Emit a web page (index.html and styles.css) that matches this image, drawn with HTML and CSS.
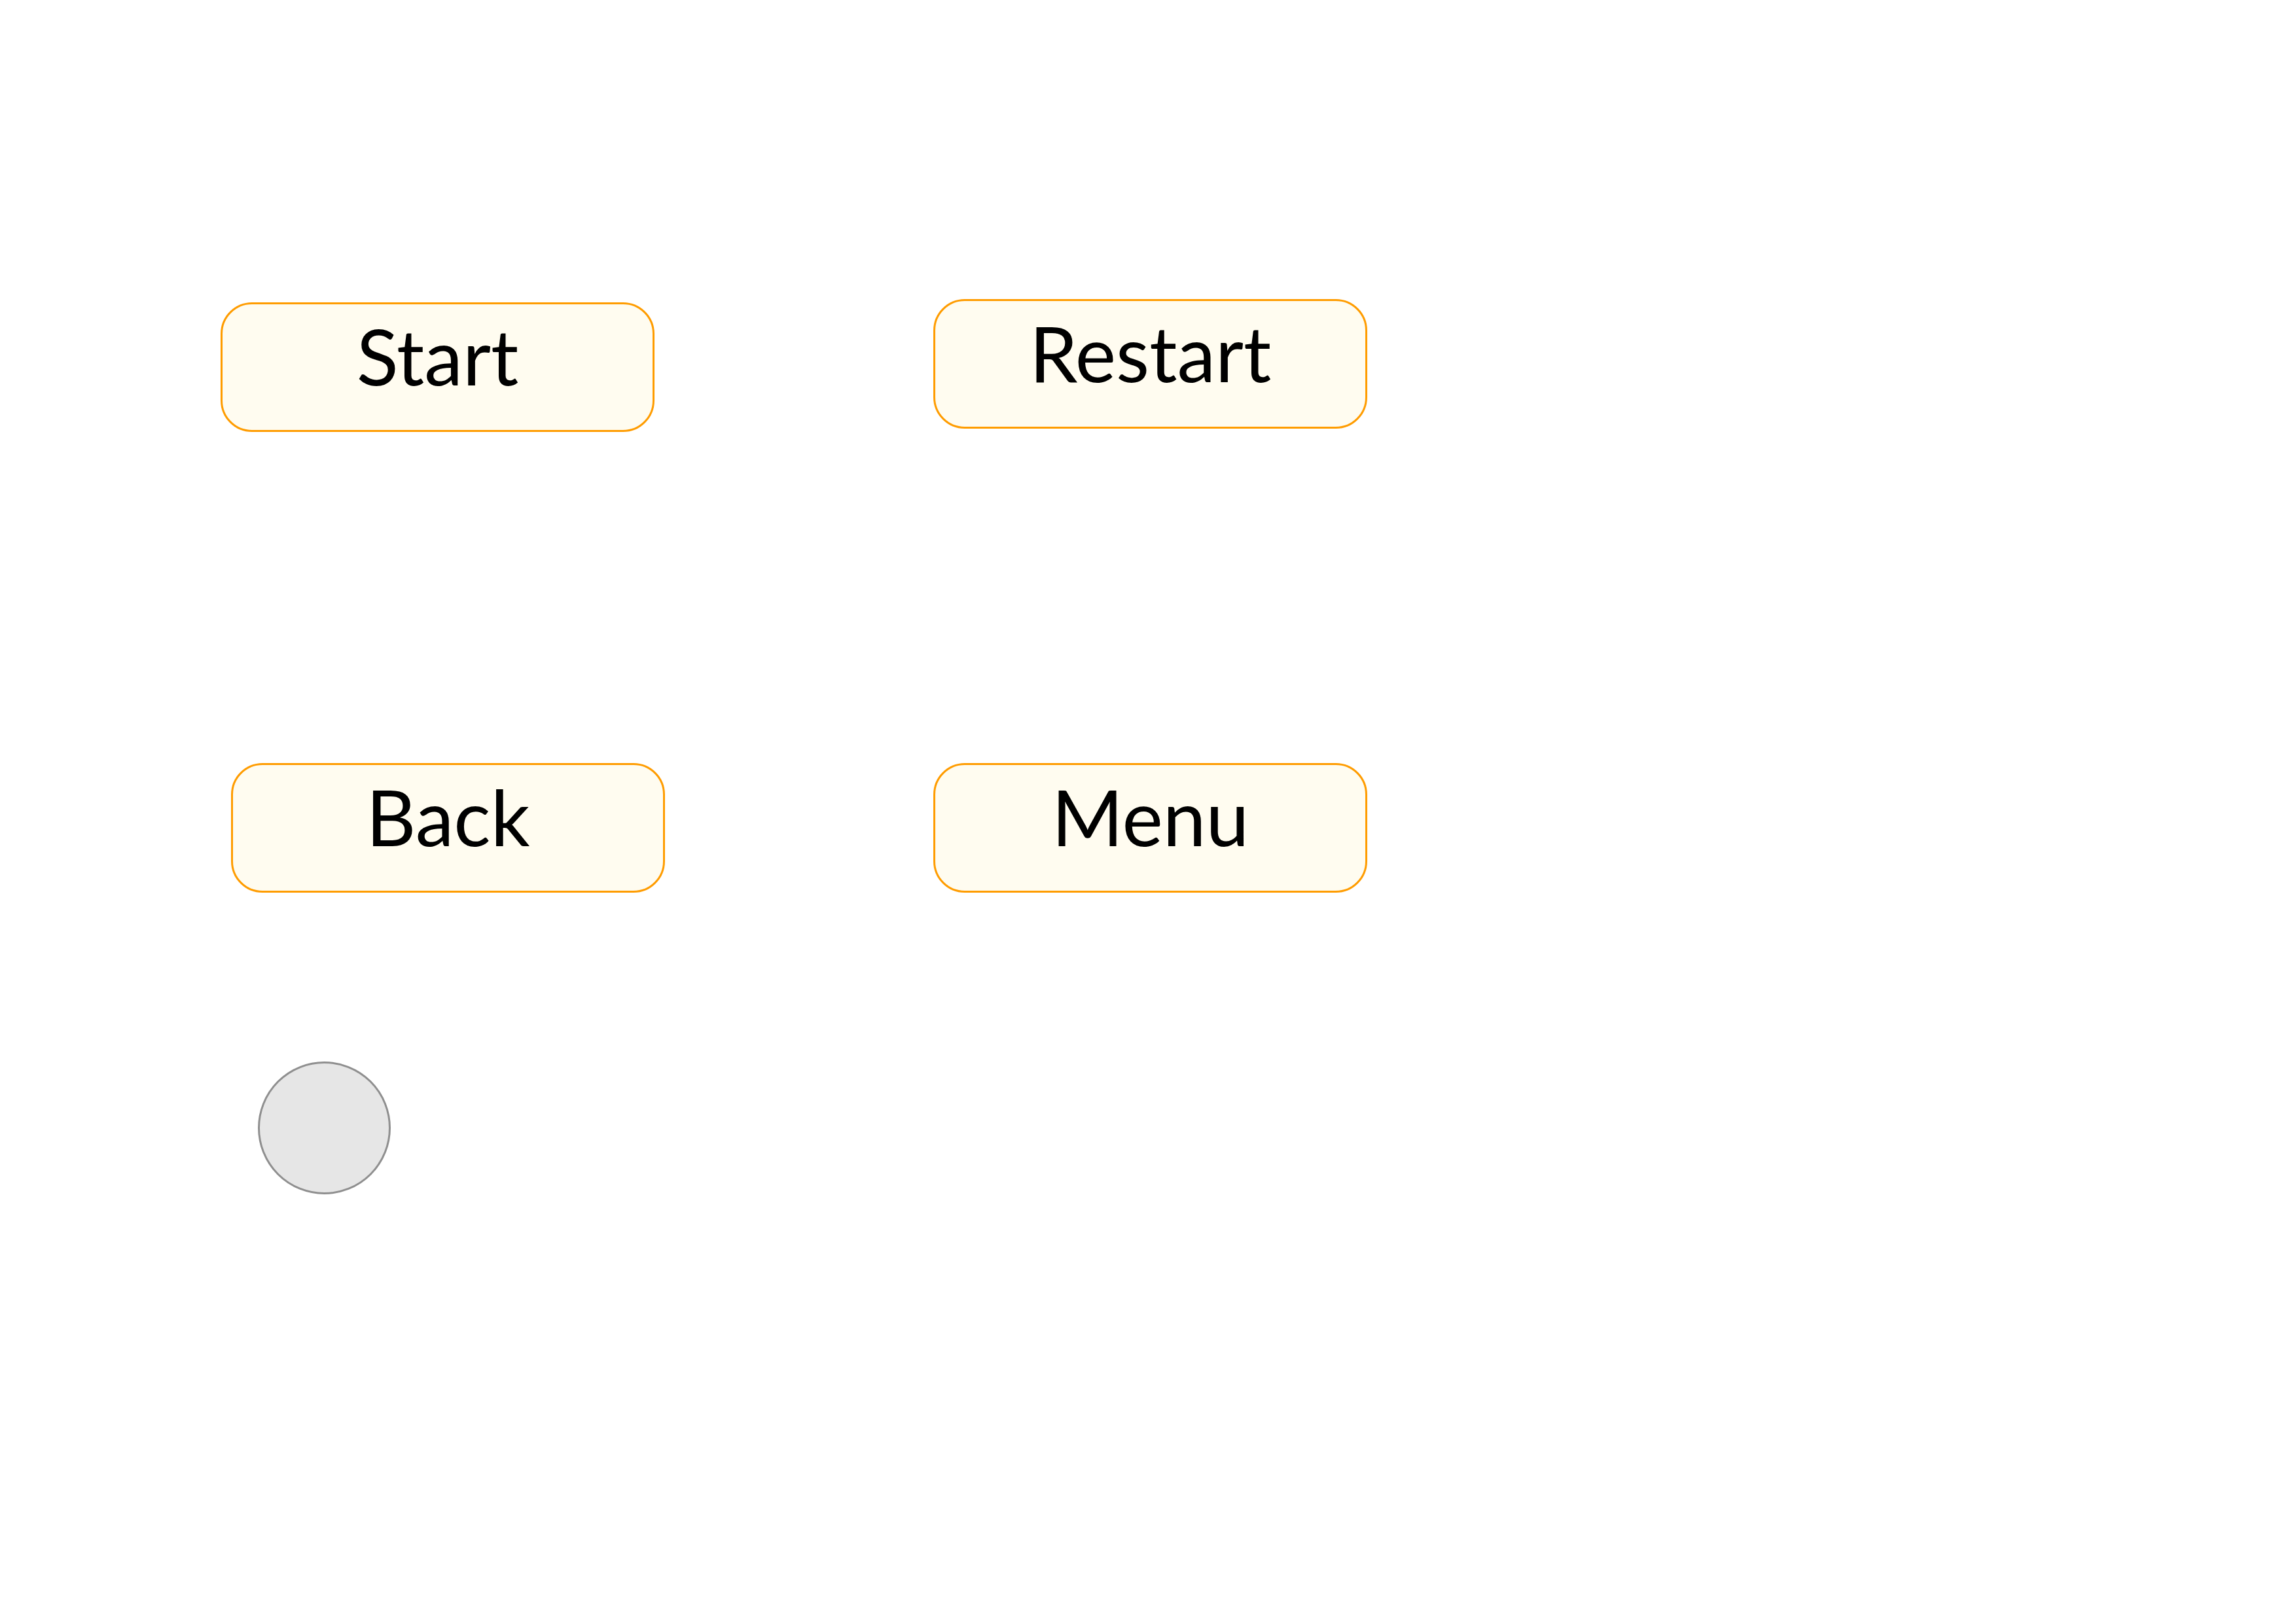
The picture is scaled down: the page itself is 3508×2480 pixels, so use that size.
FILE: index.html
```html
<!DOCTYPE html>
<html lang="en">
<head>
<meta charset="utf-8">
<title>Buttons</title>
<link rel="stylesheet" href="styles.css">
</head>
<body>
<main class="board">
  <div class="row row-top">
    <button class="btn btn-start">Start</button>
    <button class="btn">Restart</button>
  </div>
  <div class="row row-bottom">
    <button class="btn">Back</button>
    <button class="btn">Menu</button>
  </div>
  <div class="dot"></div>
</main>
</body>
</html>
```

FILE: styles.css
```css
html, body {
  margin: 0;
  padding: 0;
  background: #ffffff;
}

.board {
  width: 3508px;
  height: 2480px;
  padding-top: 457px;
  box-sizing: border-box;
  font-family: Lato, "Open Sans", sans-serif;
}

.row {
  display: flex;
  align-items: flex-start;
}

.row-top {
  padding-left: 337px;
  gap: 426px;
}

.row-bottom {
  margin-top: 506px;
  padding-left: 353px;
  gap: 410px;
}

.btn {
  box-sizing: border-box;
  width: 663px;
  height: 198px;
  border: 3px solid #ff9c00;
  border-radius: 48px;
  background: #fffcf0;
  color: #000000;
  font-family: Lato, "Open Sans", sans-serif;
  font-size: 118px;
  font-weight: 400;
  display: flex;
  align-items: center;
  justify-content: center;
  padding: 0 0 34px 0;
  margin: 0;
  line-height: 1;
}

.btn-start {
  margin-top: 5px;
}

.dot {
  box-sizing: border-box;
  width: 203px;
  height: 203px;
  margin-top: 258px;
  margin-left: 394px;
  border-radius: 50%;
  border: 3px solid #8f8f8f;
  background: #e6e6e6;
}
```
